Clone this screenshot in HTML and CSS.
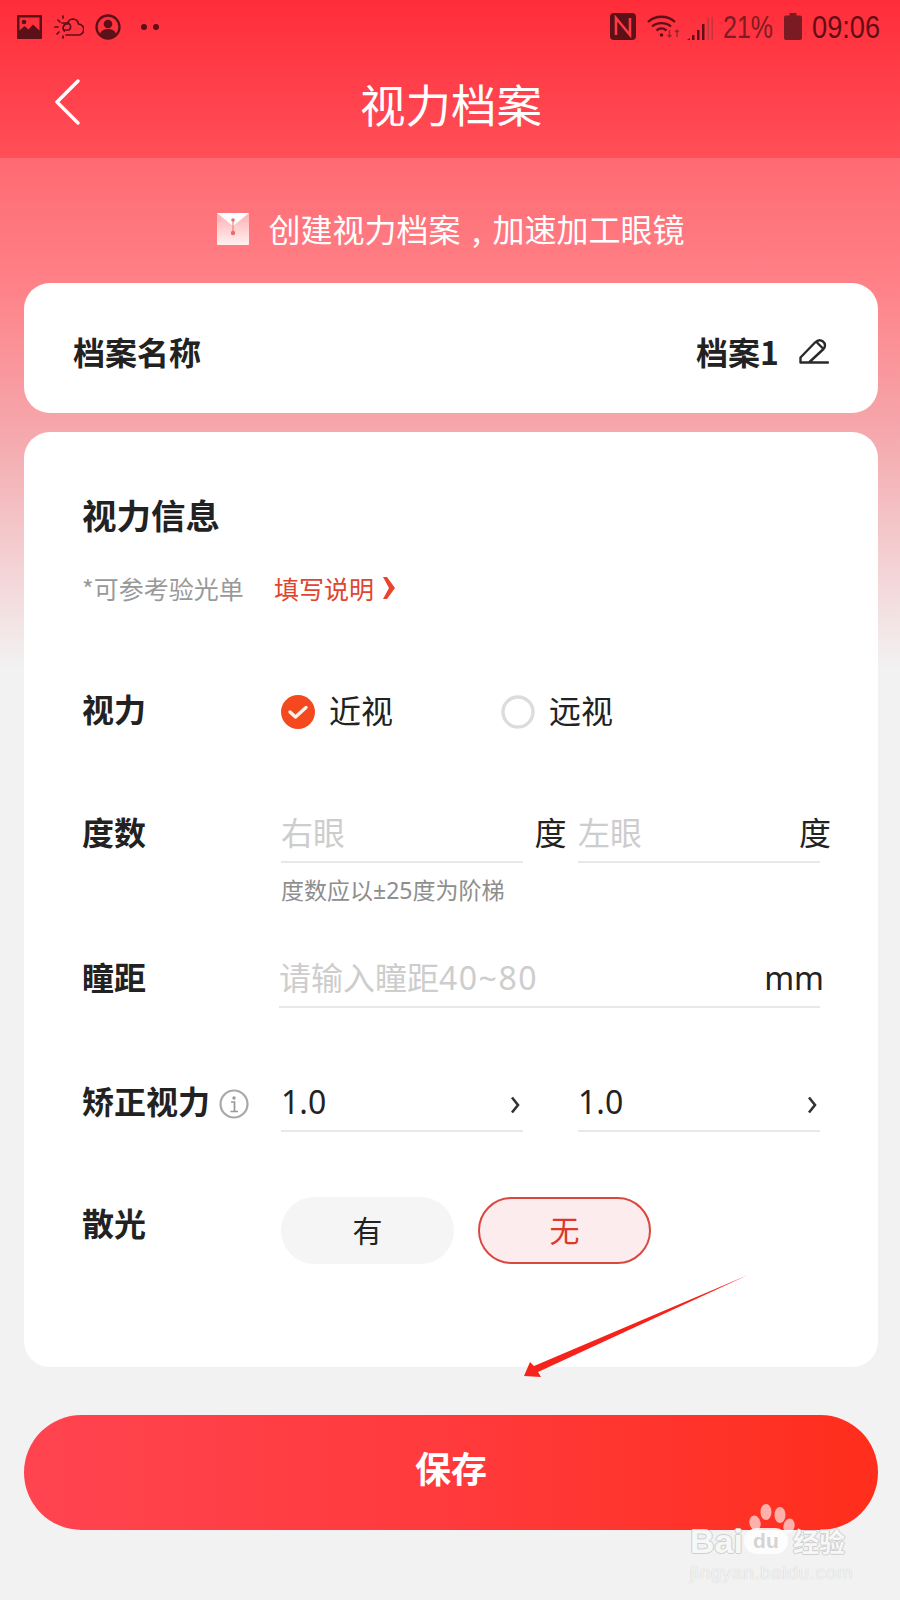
FILE: index.html
```html
<!DOCTYPE html>
<html lang="zh-CN">
<head>
<meta charset="utf-8">
<title>视力档案</title>
<link rel="stylesheet" href="styles.css">
</head>
<body>
<div class="page">
  <header class="top">
    <div class="status">
      <div class="status-left">
        <svg class="si-img" viewBox="0 0 25 24"><path fill="#5c1018" fill-rule="evenodd" d="M1 0h23a1 1 0 0 1 1 1v22a1 1 0 0 1-1 1H1a1 1 0 0 1-1-1V1a1 1 0 0 1 1-1zm1.500 2.500v13l5-4.500 4 3.500 4.500-5 6.500 6v-13z"/><circle cx="7" cy="7" r="2.300" fill="#5c1018"/></svg>
        <svg class="si-cloud" viewBox="0 0 30 24" fill="none" stroke="#5c1018" stroke-width="1.700" stroke-linecap="round"><path d="M12 20h12a5.500 5.500 0 0 0 .5-11 6 6 0 0 0-5-5c-3 0-5.500 2-6 5a4 4 0 0 0-3 7"/><path d="M8 8h6a4 4 0 0 1 1 7h-4"/><path d="M1 12h3M4 5l2 2M9 1v2M3 19l2-2M9 23v-2"/></svg>
        <svg class="si-user" viewBox="0 0 26 26"><circle cx="13" cy="13" r="11.500" fill="none" stroke="#5c1018" stroke-width="2.300"/><circle cx="13" cy="10" r="4.300" fill="#5c1018"/><path fill="#5c1018" d="M5 20c1-4 5-5 8-5s7 1 8 5c-2 3-5 4.500-8 4.500S7 23 5 20z"/></svg>
        <span class="dots"><i></i><i></i></span>
      </div>
      <div class="status-right">
        <svg class="si-nfc" viewBox="0 0 26 27"><rect width="26" height="27" rx="4" fill="#5c1018"/><path d="M6 22V5l14 17V5" fill="none" stroke="#ff3a44" stroke-width="2.600"/></svg>
        <svg class="si-wifi" viewBox="0 0 33 24" fill="none" stroke="#5c1018" stroke-width="2.300"><path d="M1 7c7-7 20-7 27 0M5 11.500c5-4.500 14-4.500 19 0M9.500 15.500c3-2.500 7-2.500 10 0"/><circle cx="14.500" cy="20" r="1.800" fill="#5c1018" stroke="none"/><path stroke="#8f2a30" stroke-width="1.400" d="M22.500 15v7M20.500 20l2 2 2-2M30 22v-7M28 17l2-2 2 2"/></svg>
        <svg class="si-signal" viewBox="0 0 26 24"><path fill="#5c1018" d="M0 24l3-2v2zM5 19h2.500v5H5zM10 14h2.500v10H10zM15 8h2.500v16H15z"/><path fill="#a8383e" d="M20.500 2H22v22h-1.500zM24.500 1H26v23h-1.500z" opacity=".7"/></svg>
        <span class="pct">21%</span>
        <svg class="si-bat" viewBox="0 0 18 27"><path fill="#7a1a22" d="M5.500 0h7v2.500H16a2 2 0 0 1 2 2V25a2 2 0 0 1-2 2H2a2 2 0 0 1-2-2V4.500a2 2 0 0 1 2-2h3.500z"/></svg>
        <span class="time">09:06</span>
      </div>
    </div>
    <nav class="nav">
      <svg class="back" viewBox="0 0 28 46" fill="none" stroke="#fff" stroke-width="3.400" stroke-linecap="round" stroke-linejoin="round"><path d="M24 2L3 23l21 21"/></svg>
      <h1 class="title">视力档案</h1>
    </nav>
  </header>

  <main class="main">
    <div class="banner">
      <svg class="env" viewBox="0 0 32 32"><defs><linearGradient id="envg" x1="0" y1="0" x2="0" y2="1"><stop offset="0" stop-color="#ffb0b4"/><stop offset="1" stop-color="#fff0f0"/></linearGradient></defs><rect width="32" height="32" rx="1" fill="url(#envg)"/><path d="M0 0h32L16 13z" fill="#fff"/><path d="M16 8v12" stroke="#e8706f" stroke-width="1"/><circle cx="16" cy="7" r="1.800" fill="#e8706f"/><circle cx="16" cy="20" r="2.200" fill="#f06a62"/></svg>
      <span>创建视力档案<span class="comma">,</span>加速加工眼镜</span>
    </div>

    <section class="card name-card">
      <span class="name-label">档案名称</span>
      <span class="name-value">档案1
        <svg class="pen" viewBox="0 0 30 28" fill="none" stroke="#2a2a2a" stroke-width="2.400" stroke-linecap="round" stroke-linejoin="round"><path d="M1.500 24.500v-5L16 4.500c2.500-2.500 5.500-3 8-1s2.500 5.500 .5 7.500L10 24.500zM10 24.500h19M18.500 5l5 5"/></svg>
      </span>
    </section>

    <section class="card info-card">
      <h2 class="heading">视力信息</h2>
      <div class="sub"><span class="sub-grey">*可参考验光单</span><span class="sub-link">填写说明<svg class="link-chev" viewBox="0 0 13 22"><path fill="#e8442e" d="M1 0h4l8 11-8 11H1l6-11z"/></svg></span></div>

      <div class="row row-vision">
        <div class="label">视力</div>
        <div class="radios">
          <div class="radio">
            <svg class="radio-ico" viewBox="0 0 34 34"><circle cx="17" cy="17" r="17" fill="#f4481f"/><path d="M9 17l5.500 5L25 12.500" fill="none" stroke="#fff0e8" stroke-width="3.400" stroke-linecap="round" stroke-linejoin="round"/></svg>
            <span class="radio-text">近视</span>
          </div>
          <div class="radio">
            <svg class="radio-ico" viewBox="0 0 34 34"><circle cx="17" cy="17" r="15" fill="none" stroke="#dcdcdc" stroke-width="3.400"/></svg>
            <span class="radio-text">远视</span>
          </div>
        </div>
      </div>

      <div class="row row-degree">
        <div class="label">度数</div>
        <div class="pair">
          <div class="field"><span class="ph">右眼</span></div>
          <span class="unit unit-a">度</span>
          <div class="field field-r"><span class="ph">左眼</span><span class="unit unit-b">度</span></div>
        </div>
      </div>
      <div class="hint">度数应以±25度为阶梯</div>

      <div class="row row-pd">
        <div class="label">瞳距</div>
        <div class="field field-wide"><span class="ph">请输入瞳距<span class="ph-num">40~80</span></span><span class="mm">mm</span></div>
      </div>

      <div class="row row-correct">
        <div class="label label-info">矫正视力
          <svg class="info" viewBox="0 0 30 30" fill="none"><circle cx="15" cy="15" r="13.500" stroke="#a8a8a8" stroke-width="2.200"/><circle cx="15" cy="9" r="1.700" fill="#999"/><path d="M12 13h3.500v9M11.500 22.500h7.500" stroke="#999" stroke-width="1.700"/></svg>
        </div>
        <div class="pair pair-sel">
          <div class="field"><span class="val">1.0</span><svg class="chev" viewBox="0 0 10 18" fill="none" stroke="#333" stroke-width="2.600"><path d="M2 1.500L8 9l-6 7.500"/></svg></div>
          <div class="field"><span class="val">1.0</span><svg class="chev" viewBox="0 0 10 18" fill="none" stroke="#333" stroke-width="2.600"><path d="M2 1.500L8 9l-6 7.500"/></svg></div>
        </div>
      </div>

      <div class="row row-astig">
        <div class="label">散光</div>
        <div class="pills">
          <div class="pill">有</div>
          <div class="pill pill-on">无</div>
        </div>
      </div>
    </section>

    <button class="save">保存</button>
  </main>

  <svg class="arrow" viewBox="0 0 900 1600"><polygon fill="#f5231b" points="748,1275 534,1366 530,1362 524,1376 541,1377 538,1372"/></svg>

  <div class="mark">
    <svg class="paw" viewBox="0 0 60 60"><g fill="#fff" fill-opacity=".62"><ellipse cx="23" cy="8" rx="5.500" ry="8"/><ellipse cx="37" cy="11" rx="5.500" ry="8"/><ellipse cx="12" cy="19" rx="5.500" ry="7.500" transform="rotate(-15 12 19)"/><ellipse cx="46" cy="22" rx="5.500" ry="7.500" transform="rotate(15 46 22)"/></g></svg>
    <div class="mark-line"><span>Bai</span><span class="mark-du">du</span><span class="mark-cn">经验</span></div>
    <div class="mark-url">jingyan.baidu.com</div>
  </div>
</div>
</body>
</html>
```

FILE: styles.css
```css
* { box-sizing: border-box; }
html, body { margin: 0; padding: 0; }
body {
  background: #f2f2f2;
  font-family: "Noto Sans CJK SC", "Noto Sans", sans-serif;
  color: #222;
}
.page { position: relative; width: 900px; height: 1600px; overflow: hidden; }

/* header */
.top { height: 158px; background: linear-gradient(#ff2d3a, #ff4f58); }
.status { height: 54px; padding: 13px 20px 0 17px; display: flex; justify-content: space-between; align-items: flex-start; }
.status-left, .status-right { display: flex; align-items: center; height: 27px; }
.si-img { width: 25px; height: 24px; }
.si-cloud { width: 30px; height: 24px; margin-left: 12px; }
.si-user { width: 26px; height: 26px; margin-left: 11px; }
.dots { display: flex; gap: 6px; margin-left: 20px; }
.dots i { width: 6px; height: 6px; border-radius: 50%; background: #5c1018; }
.si-nfc { width: 26px; height: 27px; }
.si-wifi { width: 33px; height: 24px; margin-left: 11px; }
.si-signal { width: 26px; height: 24px; margin: 3px 0 0 7px; }
.pct { margin-left: 10px; width: 51px; font: 32px/28px "Liberation Sans", sans-serif; color: #7c1c24; white-space: nowrap; transform: scaleX(.78); transform-origin: left center; }
.si-bat { width: 18px; height: 27px; margin-left: 10px; }
.time { margin-left: 10px; width: 68px; font: 32px/28px "Liberation Sans", sans-serif; color: #5f0e15; white-space: nowrap; transform: scaleX(.85); transform-origin: left center; }

.nav { position: relative; height: 104px; display: flex; justify-content: center; padding-left: 2px; }
.back { position: absolute; left: 54px; top: 25px; width: 28px; height: 46px; }
.title { margin: 0; font-size: 45.500px; font-weight: 400; line-height: 98px; color: #fff; }

/* body */
.main {
  padding: 0 22px 0 24px;
  background: linear-gradient(#ff6a72 0, #ff8187 125px, #f5a8ad 275px, #f2f2f2 510px) no-repeat;
}
.banner { height: 125px; padding: 14px 0 0 4px; display: flex; align-items: center; justify-content: center; gap: 19px; color: #fff; font-size: 32px; }
.comma { display: inline-block; width: 32px; text-align: center; }
.env { width: 32px; height: 32px; margin: 3px 0 0 -4px; }
.card { background: #fff; border-radius: 26px; }
.name-card { height: 130px; padding: 6px 49px 0; display: flex; justify-content: space-between; align-items: center; font-size: 32px; font-weight: 700; }
.name-value { display: flex; align-items: center; gap: 20px; }
.pen { width: 30px; height: 28px; margin-top: 2px; }

.info-card { height: 935px; margin-top: 19px; padding: 53px 56px 0 58px; }
.heading { margin: 0; font-size: 34.500px; font-weight: 700; line-height: 58px; }
.sub { margin-top: 27px; height: 36px; display: flex; align-items: center; font-size: 25px; line-height: 36px; }
.sub-grey { color: #999; width: 192px; }
.sub-link { color: #e0452f; display: flex; align-items: center; }
.link-chev { width: 13px; height: 22px; margin-left: 8px; }

.row { display: flex; }
.label { width: 199px; flex: none; font-size: 32px; font-weight: 700; line-height: 46px; }
.row-vision { margin-top: 79px; height: 46px; align-items: center; }
.radios { display: flex; }
.radio { width: 220px; display: flex; align-items: center; gap: 14px; font-size: 32px; line-height: 46px; }
.radio-ico { width: 34px; height: 34px; margin-top: 7px; }
.radio-text { margin-top: 2px; }

.row-degree { margin-top: 77px; height: 55px; }
.pair { display: flex; flex: 1; }
.field { position: relative; width: 242px; height: 55px; border-bottom: 2px solid #e8e8e8; display: flex; justify-content: space-between; font-size: 32px; line-height: 46px; }
.ph { color: #cdcdcd; }
.ph-num { letter-spacing: 1.500px; font-family: "Noto Sans", sans-serif; }
.unit { font-size: 32px; line-height: 46px; color: #222; }
.unit-a { width: 55px; text-align: center; }
.field-r { width: 242px; }
.unit-b { position: absolute; right: -11px; top: 0; }
.hint { margin: 11px 0 0 199px; height: 32px; font-family: "Noto Sans", "Noto Sans CJK SC", sans-serif; font-size: 23px; line-height: 32px; color: #8e8e8e; white-space: nowrap; }

.row-pd { margin-top: 47px; height: 55px; }
.field-wide { width: 541px; margin-left: -2px; }
.mm { font-family: "Noto Sans", sans-serif; margin-right: -4px; line-height: 50px; }

.row-correct { margin-top: 69px; height: 55px; }
.label-info { display: flex; align-items: flex-start; gap: 9px; white-space: nowrap; }
.info { width: 30px; height: 30px; margin-top: 12px; }
.pair-sel { gap: 55px; }
.val { font-family: "Noto Sans", sans-serif; color: #222; font-size: 32px; line-height: 46px; padding-top: 2px; }
.chev { width: 10px; height: 18px; margin: 19px 3px 0 0; }

.row-astig { margin-top: 67px; height: 67px; }
.pills { display: flex; gap: 24px; margin-top: -2px; }
.pill { width: 173px; height: 67px; border-radius: 34px; background: #f5f5f5; display: flex; align-items: center; justify-content: center; padding-bottom: 4px; font-size: 30px; color: #222; }
.pill-on { background: #fdeced; border: 2px solid #d9483f; color: #d93a2b; }

.save {
  display: block; width: 854px; height: 115px; margin-top: 48px; padding: 0 0 10px; border: 0; border-radius: 58px;
  background: linear-gradient(90deg, #ff4450, #ff3a3c 50%, #ff2e1c);
  color: #fff; font: 700 36px/105px "Noto Sans CJK SC", sans-serif;
}

/* overlays */
.arrow { position: absolute; left: 0; top: 0; width: 900px; height: 1600px; pointer-events: none; }
.mark { position: absolute; left: 690px; top: 1504px; width: 170px; color: rgba(255,255,255,.85); text-shadow: 1px 0 0 #cfcfcf, -1px 0 0 #cfcfcf, 0 1px 0 #cfcfcf, 0 -1px 0 #cfcfcf; }
.paw { position: absolute; left: 53px; top: 0; width: 60px; height: 60px; }
.mark-line { display: flex; align-items: center; margin-top: 22px; height: 30px; font: 700 34px/30px "Liberation Sans", sans-serif; white-space: nowrap; }
.mark-du { margin-left: 1px; width: 44px; height: 26px; border-radius: 14px; background: rgba(255,255,255,.85); color: #d4d4d4; font-size: 21px; line-height: 26px; text-align: center; text-shadow: none; }
.mark-cn { margin-left: 5px; font: 700 26px/30px "Noto Sans CJK SC", sans-serif; }
.mark-url { margin-top: 7px; font: 400 19px/20px "Liberation Sans", sans-serif; letter-spacing: .6px; white-space: nowrap; color: rgba(255,255,255,.8); text-shadow: 0 0 1px #bbb; }
```
